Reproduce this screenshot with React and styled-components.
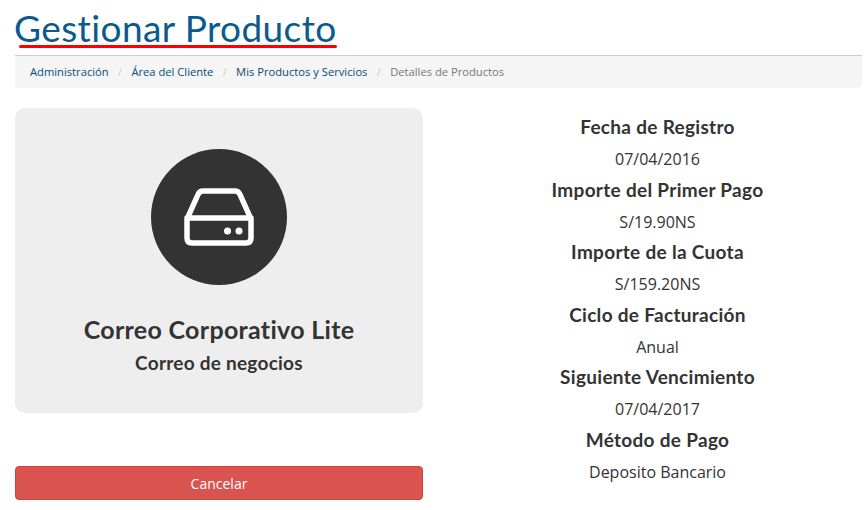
import React from 'react';
import styled, { createGlobalStyle } from 'styled-components';

const Global = createGlobalStyle`
  html, body { margin: 0; padding: 0; background: #fff; }
  body { font-family: "Open Sans", sans-serif; color: #333; overflow: hidden; }
`;

const Page = styled.div`
  width: 847px;
  height: 510px;
  margin-left: 15px;
  display: flex;
  flex-direction: column;
`;

const Header = styled.header`
  position: relative;
  box-sizing: border-box;
  border-bottom: 1px solid #ccc;
  height: 56px;
`;

const Title = styled.h1`
  margin: 0 0 0 -1px;
  padding-top: 7px;
  font-family: Lato, "Open Sans", sans-serif;
  font-weight: 400;
  font-size: 37px;
  line-height: 42px;
  letter-spacing: 0.4px;
  color: #0b5a8f;
`;

const Underline = styled.span`
  position: absolute;
  left: 4px;
  top: 45px;
  width: 318px;
  height: 3px;
  border-radius: 2px;
  background: #f00;
`;

const Crumbs = styled.nav`
  height: 32px;
  background: #f5f5f5;
  border-radius: 0 0 4px 4px;
  padding: 0 15px 2px;
  box-sizing: border-box;
  display: flex;
  align-items: center;
  font-size: 11.2px;
`;

const Crumb = styled.span`
  color: ${p => (p.$active ? '#777' : '#0b4a75')};
`;

const Sep = styled.span`
  color: #ccc;
  padding: 0 9.3px;
`;

const Columns = styled.div`
  display: grid;
  grid-template-columns: 408px 409px;
  column-gap: 30px;
  margin-top: 20px;
`;

const Left = styled.div`
  display: flex;
  flex-direction: column;
`;

const Card = styled.section`
  height: 305px;
  background: #eee;
  border-radius: 10px;
  display: flex;
  flex-direction: column;
  align-items: center;
  padding-top: 41px;
  box-sizing: border-box;
`;

const Circle = styled.div`
  width: 136px;
  height: 136px;
  border-radius: 50%;
  background: #333;
  display: flex;
  align-items: center;
  justify-content: center;
`;

const ProductName = styled.h3`
  margin: 29px 0 0;
  font-family: Lato, "Open Sans", sans-serif;
  font-weight: 700;
  font-size: 25px;
  line-height: 30px;
  letter-spacing: 0.3px;
  color: #333;
`;

const ProductGroup = styled.h4`
  margin: 7px 0 0;
  font-family: Lato, "Open Sans", sans-serif;
  font-weight: 700;
  font-size: 19px;
  line-height: 24px;
  letter-spacing: 0.25px;
  color: #333;
`;

const CancelButton = styled.button`
  margin-top: 53px;
  height: 34px;
  width: 100%;
  box-sizing: border-box;
  border: 1px solid #d43f3a;
  border-radius: 4px;
  background: #d9534f;
  color: #fff;
  font-family: "Open Sans", sans-serif;
  font-size: 14px;
  padding: 0;
`;

const Info = styled.dl`
  margin: 4px 0 0;
  text-align: center;
`;

const Label = styled.dt`
  font-family: Lato, "Open Sans", sans-serif;
  font-weight: 700;
  font-size: 19px;
  line-height: 30px;
  height: 31px;
  letter-spacing: 0.3px;
  color: #333;
`;

const Value = styled.dd`
  margin: 0;
  font-size: 16px;
  line-height: 32px;
  height: 31.6px;
  color: #333;
`;

const rows = [
  ['Fecha de Registro', '07/04/2016'],
  ['Importe del Primer Pago', 'S/19.90NS'],
  ['Importe de la Cuota', 'S/159.20NS'],
  ['Ciclo de Facturación', 'Anual'],
  ['Siguiente Vencimiento', '07/04/2017'],
  ['Método de Pago', 'Deposito Bancario'],
];

const crumbs = ['Administración', 'Área del Cliente', 'Mis Productos y Servicios'];

const DriveIcon = () => (
  <svg width="70" height="58" viewBox="0 0 70 58" fill="none" stroke="#fff" strokeWidth="5.5" strokeLinejoin="round">
    <path d="M3.5 30 L14 6.5 Q15.5 3 19 3 H51 Q54.5 3 56 6.5 L66.5 30" />
    <path d="M3 30 H67 V50 Q67 55 62 55 H8 Q3 55 3 50 Z" />
    <circle cx="43.5" cy="43" r="3.5" fill="#fff" stroke="none" />
    <circle cx="55" cy="43" r="3.5" fill="#fff" stroke="none" />
  </svg>
);

export default function App() {
  return (
    <Page>
      <Global />
      <Header>
        <Title>Gestionar Producto</Title>
        <Underline />
      </Header>
      <Crumbs>
        {crumbs.map(c => (
          <React.Fragment key={c}>
            <Crumb>{c}</Crumb>
            <Sep>/</Sep>
          </React.Fragment>
        ))}
        <Crumb $active>Detalles de Productos</Crumb>
      </Crumbs>
      <Columns>
        <Left>
          <Card>
            <Circle><DriveIcon /></Circle>
            <ProductName>Correo Corporativo Lite</ProductName>
            <ProductGroup>Correo de negocios</ProductGroup>
          </Card>
          <CancelButton>Cancelar</CancelButton>
        </Left>
        <Info>
          {rows.map(([l, v]) => (
            <React.Fragment key={l}>
              <Label>{l}</Label>
              <Value>{v}</Value>
            </React.Fragment>
          ))}
        </Info>
      </Columns>
    </Page>
  );
}
